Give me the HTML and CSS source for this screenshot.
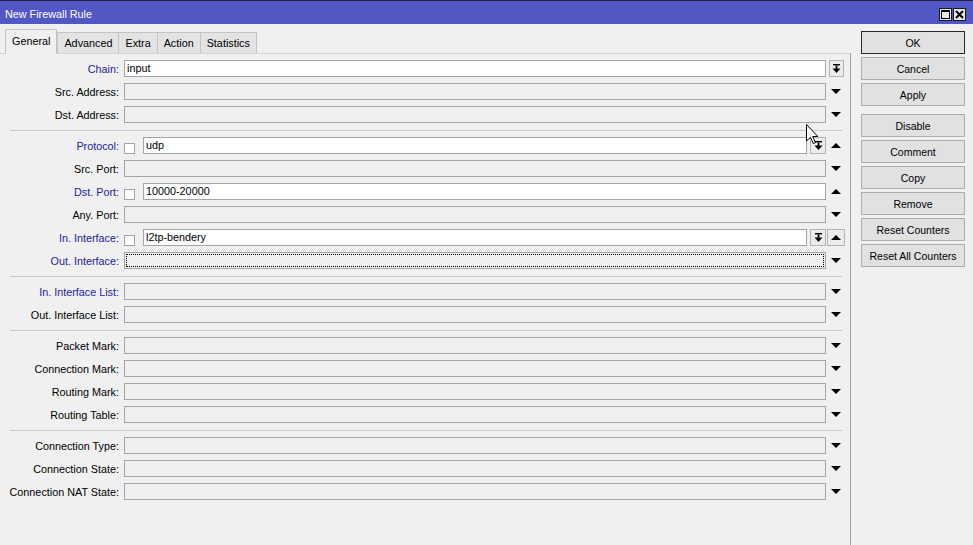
FILE: index.html
```html
<!DOCTYPE html>
<html>
<head>
<meta charset="utf-8">
<link rel="stylesheet" href="styles.css">
</head>
<body>
<div class="window">
  <div class="titlebar">
    <span class="title">New Firewall Rule</span>
    <div class="wbtns">
      <svg class="wbtn" width="13" height="13" viewBox="0 0 13 13"><rect x="0.5" y="0.5" width="12" height="12" fill="#e6e6e6" stroke="#1a1a1a"/><rect x="2.5" y="2.5" width="8" height="8" fill="none" stroke="#000"/><rect x="2" y="2" width="9" height="2" fill="#000"/></svg>
      <svg class="wbtn" width="13" height="13" viewBox="0 0 13 13"><rect x="0.5" y="0.5" width="12" height="12" fill="#e6e6e6" stroke="#1a1a1a"/><path d="M3 3 L10 10 M10 3 L3 10" stroke="#000" stroke-width="2"/></svg>
    </div>
  </div>
  <div class="body">
    <div class="main">
      <div class="tabs">
        <div class="tab active">General</div>
        <div class="tab">Advanced</div>
        <div class="tab">Extra</div>
        <div class="tab">Action</div>
        <div class="tab">Statistics</div>
      </div>
      <div class="panel">
        <div class="row">
          <div class="label blue">Chain:</div>
          <div class="field"><div class="input filled">input</div></div>
          <div class="acol"><div class="dd dd-narrow"><svg width="9" height="10" viewBox="0 0 9 10"><rect x="1" y="0" width="7" height="1.4" fill="#000"/><rect x="3.6" y="1.5" width="1.8" height="4" fill="#000"/><polygon points="0.5,4.5 8.5,4.5 4.5,9" fill="#000"/></svg></div></div>
        </div>
        <div class="row">
          <div class="label">Src. Address:</div>
          <div class="field"><div class="input"></div></div>
          <div class="acol"><span class="down"></span></div>
        </div>
        <div class="row">
          <div class="label">Dst. Address:</div>
          <div class="field"><div class="input"></div></div>
          <div class="acol"><span class="down"></span></div>
        </div>
        <div class="sep"></div>
        <div class="row">
          <div class="label blue">Protocol:</div>
          <div class="field"><span class="check"></span><div class="input filled">udp</div><div class="dd"><svg width="9" height="10" viewBox="0 0 9 10"><rect x="1" y="0" width="7" height="1.4" fill="#000"/><rect x="3.6" y="1.5" width="1.8" height="4" fill="#000"/><polygon points="0.5,4.5 8.5,4.5 4.5,9" fill="#000"/></svg></div></div>
          <div class="acol"><span class="up"></span></div>
        </div>
        <div class="row">
          <div class="label">Src. Port:</div>
          <div class="field"><div class="input"></div></div>
          <div class="acol"><span class="down"></span></div>
        </div>
        <div class="row">
          <div class="label blue">Dst. Port:</div>
          <div class="field"><span class="check"></span><div class="input filled">10000-20000</div></div>
          <div class="acol"><span class="up"></span></div>
        </div>
        <div class="row">
          <div class="label">Any. Port:</div>
          <div class="field"><div class="input"></div></div>
          <div class="acol"><span class="down"></span></div>
        </div>
        <div class="row">
          <div class="label blue">In. Interface:</div>
          <div class="field"><span class="check"></span><div class="input filled">l2tp-bendery</div><div class="dd"><svg width="9" height="10" viewBox="0 0 9 10"><rect x="1" y="0" width="7" height="1.4" fill="#000"/><rect x="3.6" y="1.5" width="1.8" height="4" fill="#000"/><polygon points="0.5,4.5 8.5,4.5 4.5,9" fill="#000"/></svg></div></div>
          <div class="acol"><div class="upbtn"><span class="up"></span></div></div>
        </div>
        <div class="row">
          <div class="label blue">Out. Interface:</div>
          <div class="field"><div class="input focus"></div></div>
          <div class="acol"><span class="down"></span></div>
        </div>
        <div class="sep"></div>
        <div class="row">
          <div class="label blue">In. Interface List:</div>
          <div class="field"><div class="input"></div></div>
          <div class="acol"><span class="down"></span></div>
        </div>
        <div class="row">
          <div class="label">Out. Interface List:</div>
          <div class="field"><div class="input"></div></div>
          <div class="acol"><span class="down"></span></div>
        </div>
        <div class="sep"></div>
        <div class="row">
          <div class="label">Packet Mark:</div>
          <div class="field"><div class="input"></div></div>
          <div class="acol"><span class="down"></span></div>
        </div>
        <div class="row">
          <div class="label">Connection Mark:</div>
          <div class="field"><div class="input"></div></div>
          <div class="acol"><span class="down"></span></div>
        </div>
        <div class="row">
          <div class="label">Routing Mark:</div>
          <div class="field"><div class="input"></div></div>
          <div class="acol"><span class="down"></span></div>
        </div>
        <div class="row">
          <div class="label">Routing Table:</div>
          <div class="field"><div class="input"></div></div>
          <div class="acol"><span class="down"></span></div>
        </div>
        <div class="sep"></div>
        <div class="row">
          <div class="label">Connection Type:</div>
          <div class="field"><div class="input"></div></div>
          <div class="acol"><span class="down"></span></div>
        </div>
        <div class="row">
          <div class="label">Connection State:</div>
          <div class="field"><div class="input"></div></div>
          <div class="acol"><span class="down"></span></div>
        </div>
        <div class="row">
          <div class="label">Connection NAT State:</div>
          <div class="field"><div class="input"></div></div>
          <div class="acol"><span class="down"></span></div>
        </div>
      </div>
    </div>
    <div class="side">
      <div class="btn default">OK</div>
      <div class="btn">Cancel</div>
      <div class="btn">Apply</div>
      <div class="btn gap">Disable</div>
      <div class="btn">Comment</div>
      <div class="btn">Copy</div>
      <div class="btn">Remove</div>
      <div class="btn">Reset Counters</div>
      <div class="btn">Reset All Counters</div>
    </div>
  </div>
  <svg class="cursor" width="13" height="21" viewBox="0 0 13 21"><path d="M0.5 0.5 V17 L4.5 13.2 L7.3 19.6 L9.4 18.7 L6.7 12.5 H11.8 Z" fill="#fff" stroke="#000" stroke-width="1" stroke-linejoin="miter"/></svg>
</div>
</body>
</html>
```

FILE: styles.css
```css
* { box-sizing: border-box; }
html, body { margin: 0; padding: 0; }
body {
  font-family: "Liberation Sans", Arial, sans-serif;
  font-size: 10.8px;
  color: #000;
  background: #f0f0f0;
}
.window {
  position: relative;
  width: 973px;
  height: 545px;
  background: #f0f0f0;
  overflow: hidden;
}
.titlebar {
  height: 24px;
  background: #5357c6;
  border-top: 1px solid #22224a;
  display: flex;
  align-items: center;
  justify-content: space-between;
  padding: 3px 7px 0 5px;
}
.title { color: #fff; font-size: 10.8px; }
.wbtns { display: flex; gap: 1px; }
.wbtn { display: block; }
.body {
  display: flex;
  height: 521px;
}
.main {
  width: 851px;
  display: flex;
  flex-direction: column;
}
.tabs {
  height: 29px;
  display: flex;
  align-items: flex-end;
  padding-left: 5px;
  position: relative;
  z-index: 1;
}
.tab {
  height: 21px;
  padding: 0 6px;
  background: #e3e3e3;
  border: 1px solid #c4c4c4;
  border-bottom: none;
  margin-left: -1px;
  display: flex;
  align-items: center;
  line-height: 1;
}
.tab.active {
  height: 25px;
  margin-bottom: -1px;
  margin-left: 0;
  background: #f0f0f0;
  border-color: #c4c4c4;
  padding: 0 6px 2px 6px;
}
.tab.active + .tab { margin-left: 0; }
.panel {
  flex: 1;
  border-top: 1px solid #d6d6d6;
  border-right: 1px solid #a0a0a0;
  padding-top: 3px;
}
.row {
  height: 23px;
  display: flex;
  align-items: center;
}
.label {
  width: 120px;
  text-align: right;
  white-space: nowrap;
  padding-right: 1px;
}
.label.blue { color: #23239c; }
.field {
  width: 702px;
  margin-left: 4px;
  height: 23px;
  display: flex;
  align-items: center;
}
.input {
  flex: 1;
  height: 17px;
  border: 1px solid #a5a5a5;
  background: #f0f0f0;
  padding: 0 2px;
  line-height: 15px;
  white-space: nowrap;
}
.input.filled { background: #fff; }
.input.focus {
  outline: 1px dotted #000;
  outline-offset: -3px;
}
.check {
  width: 11px;
  height: 11px;
  border: 1px solid #a5a5a5;
  background: #fff;
  align-self: flex-end;
  margin-bottom: 3px;
  margin-right: 8px;
}
.dd {
  width: 16px;
  height: 17px;
  margin-left: 3px;
  border: 1px solid #b4b4b4;
  background: #ececec;
  display: flex;
  align-items: center;
  justify-content: center;
}
.dd svg { display: block; }
.dd-narrow { width: 15px; margin-left: 0; }
.acol {
  width: 20px;
  display: flex;
  justify-content: center;
  align-items: center;
}
.down {
  width: 0;
  height: 0;
  border-left: 5px solid transparent;
  border-right: 5px solid transparent;
  border-top: 5px solid #000;
}
.up {
  width: 0;
  height: 0;
  border-left: 5px solid transparent;
  border-right: 5px solid transparent;
  border-bottom: 5px solid #000;
}
.upbtn {
  width: 18px;
  height: 17px;
  border: 1px solid #b4b4b4;
  background: #ececec;
  display: flex;
  align-items: center;
  justify-content: center;
}
.sep {
  margin: 4px 8px 3px 10px;
  border-top: 1px solid #cacaca;
}
.side {
  padding: 7px 0 0 10px;
  display: flex;
  flex-direction: column;
  gap: 3px;
}
.btn {
  width: 104px;
  height: 23px;
  border: 1px solid #adadad;
  background: #e1e1e1;
  display: flex;
  align-items: center;
  justify-content: center;
  font-size: 10.5px;
  white-space: nowrap;
}
.btn.default { border-color: #2a2a2a; }
.btn.gap { margin-top: 5px; }
.cursor {
  position: absolute;
  left: 806px;
  top: 124px;
}
```
